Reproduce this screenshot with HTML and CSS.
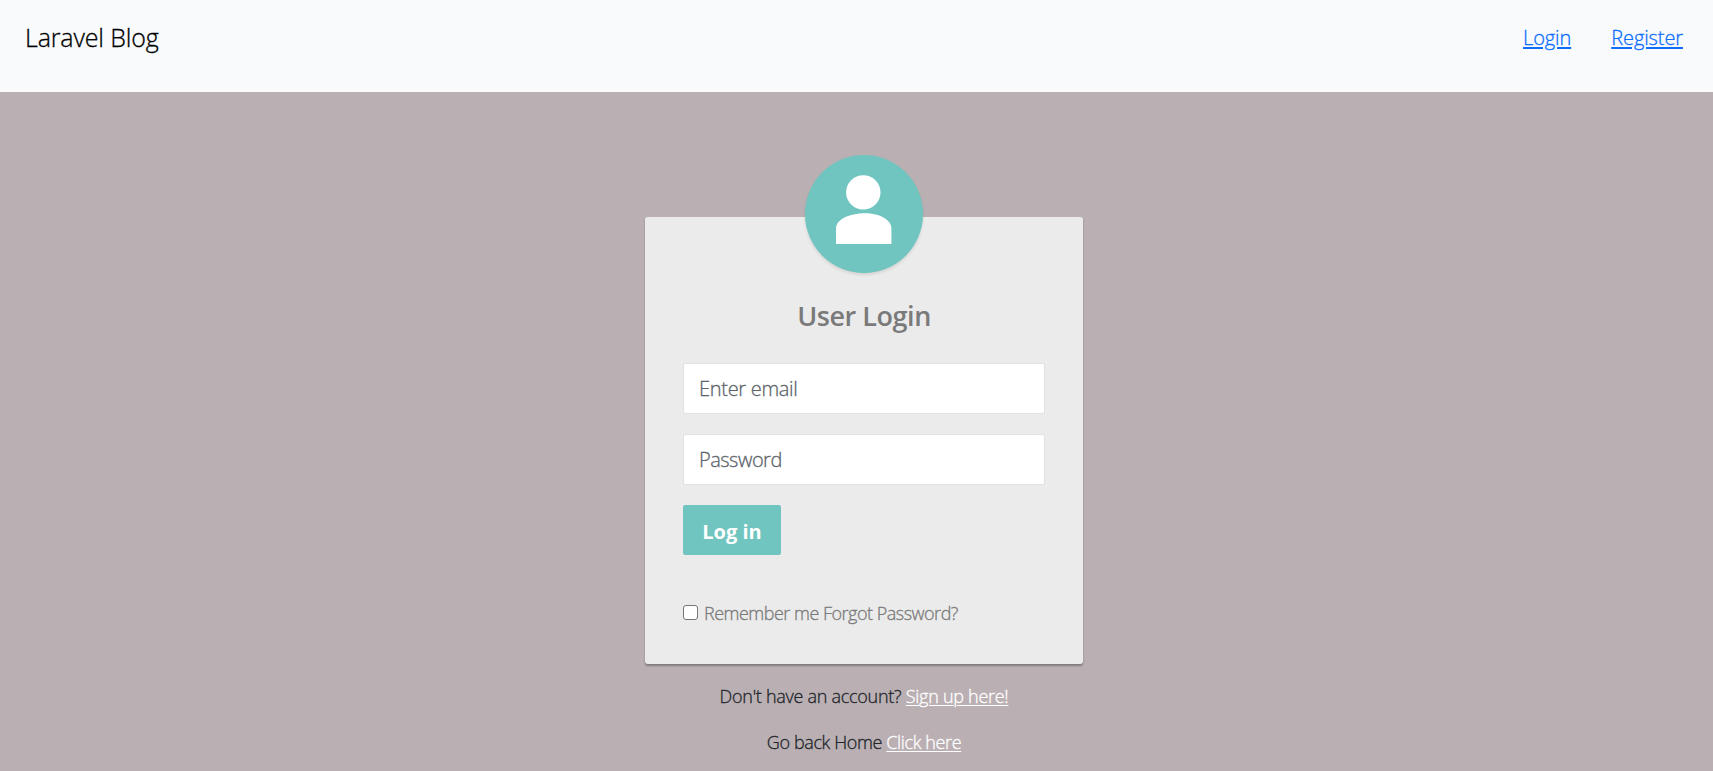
FILE: index.html
```html
<!DOCTYPE html>
<html lang="en">
<head>
<meta charset="utf-8">
<title>Laravel Blog</title>
<link rel="stylesheet" href="styles.css">
</head>
<body>
<header class="navbar">
  <span class="brand">Laravel Blog</span>
  <nav class="nav-links"><a class="login" href="#">Login</a><a class="register" href="#">Register</a></nav>
</header>
<main class="page">
  <form class="card">
    <div class="avatar">
      <svg width="118" height="118" viewBox="0 0 118 118"><circle cx="58.3" cy="37.4" r="17.2"/><path d="M31 89V73.500C31 64.500 44 58.200 60 58.200C75 58.200 86.400 65 86.400 73.500V89Z"/></svg>
    </div>
    <h2 class="title">User Login</h2>
    <input class="field email" type="text" placeholder="Enter email">
    <input class="field password" type="password" placeholder="Password">
    <button class="submit" type="button">Log in</button>
    <label class="remember"><input class="check" type="checkbox"><span>Remember me Forgot Password?</span></label>
  </form>
  <p class="note signup">Don't have an account? <a href="#">Sign up here!</a></p>
  <p class="note home">Go back Home <a href="#">Click here</a></p>
</main>
</body>
</html>
```
FILE: styles.css
```css
* { box-sizing: border-box; }
body {
  margin: 0;
  height: 771px;
  overflow: hidden;
  background: #bab0b3;
  color: #212529;
  font-family: "Segoe UI", "Open Sans", "Noto Sans", sans-serif;
  font-size: 18px;
  font-weight: 300;
  -webkit-text-stroke: 0.3px;
}
.navbar {
  display: flex;
  justify-content: space-between;
  height: 92px;
  padding: 18px 30px 0 25px;
  background: #f8fafc;
}
.brand { font-size: 25px; line-height: 39px; color: #000; letter-spacing: -0.15px; }
.nav-links { display: flex; gap: 40px; font-size: 20px; line-height: 40px; letter-spacing: -0.1px; }
.nav-links a {
  color: #0d6efd;
  text-underline-offset: 2px;
  text-decoration-thickness: 2px;
}
.page {
  display: flex;
  flex-direction: column;
  align-items: center;
  padding-top: 125px;
  padding-left: 15px;
}
.card {
  display: flex;
  flex-direction: column;
  align-items: flex-start;
  width: 438px;
  height: 447px;
  padding: 0 38px;
  background: #ebebeb;
  border-radius: 3px;
  box-shadow: 0 2px 2px rgba(0, 0, 0, .3);
}
.avatar {
  align-self: center;
  width: 118px;
  height: 118px;
  margin-top: -62px;
  border-radius: 50%;
  background: #70c5c0;
  box-shadow: 0 2px 3px rgba(0, 0, 0, .1);
}
.avatar svg { display: block; fill: #fff; }
.title {
  align-self: center;
  margin: 23px 0 27px;
  font-size: 27px;
  line-height: 40px;
  font-weight: 600;
  color: #7a7a7a;
  letter-spacing: -0.45px;
  white-space: nowrap;
  -webkit-text-stroke: 0;
}
.field {
  width: 362px;
  height: 51px;
  margin: 0 0 20px;
  padding: 0 15px;
  border: 1px solid #e1e1e1;
  border-radius: 2px;
  background: #fff;
  font: inherit;
  font-size: 20px;
  letter-spacing: -0.3px;
}
.password { letter-spacing: -0.5px; }
.field::placeholder { color: #5c636a; opacity: 1; }
.submit {
  width: 98px;
  height: 50px;
  padding: 2px 0 0;
  border: 0;
  border-radius: 2px;
  background: #70c5c0;
  color: #fff;
  font: inherit;
  font-size: 20px;
  font-weight: 700;
  -webkit-text-stroke: 0;
}
.remember {
  display: flex;
  align-items: center;
  gap: 6px;
  margin-top: 45px;
  line-height: 27px;
  color: #7a7a7a;
  letter-spacing: -0.5px;
  white-space: nowrap;
}
.check {
  appearance: none;
  width: 15px;
  height: 15px;
  margin: 0 0 2px;
  border: 1px solid #767676;
  border-radius: 3px;
  background: #fff;
}
.note { margin: 0; line-height: 27px; letter-spacing: -0.28px; white-space: nowrap; }
.signup { margin-top: 19px; }
.home { margin-top: 19px; letter-spacing: -0.38px; }
.note a { color: #fff; text-underline-offset: 2px; text-decoration-thickness: 1px; }
```
